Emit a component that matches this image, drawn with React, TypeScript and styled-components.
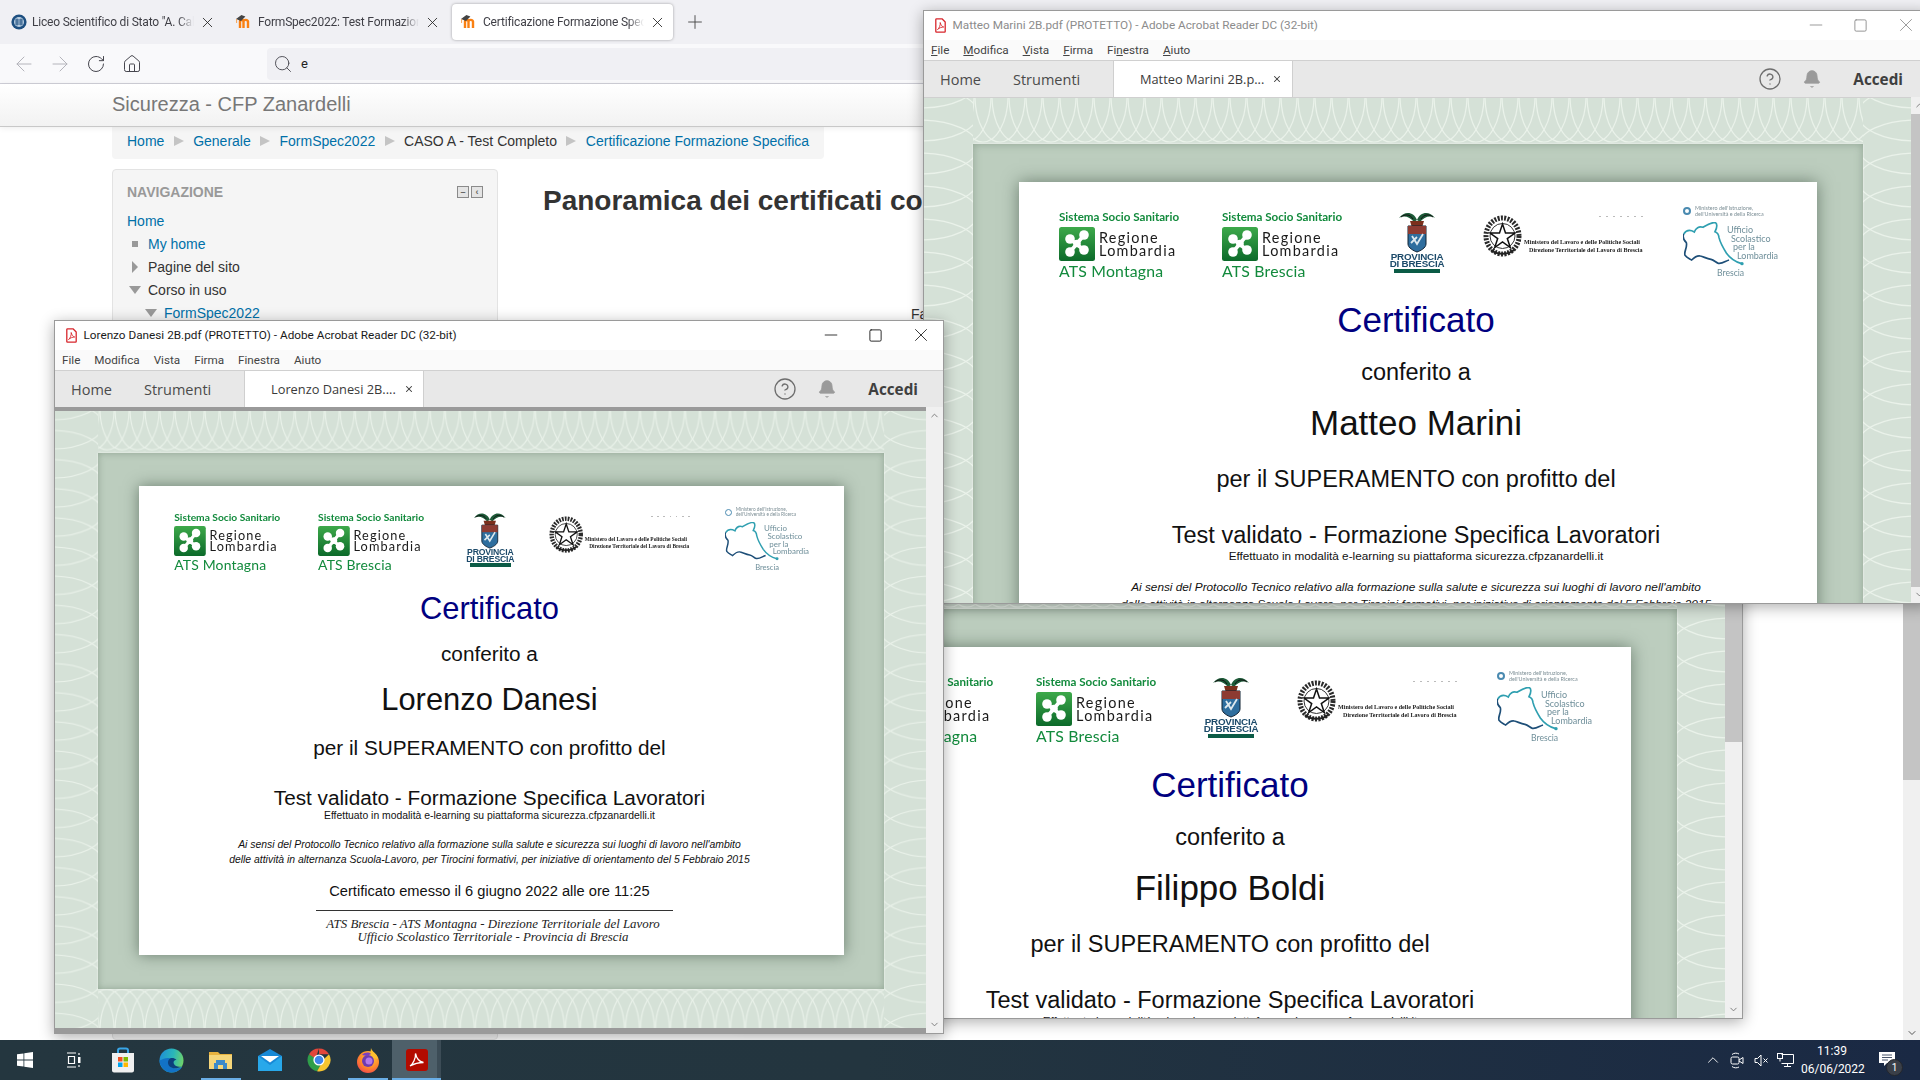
import React from "react";
import styled, { createGlobalStyle } from "styled-components";
import { ArrowLeft, ArrowRight, RotateCw, House, Search, Plus, X, CircleHelp, Bell, Minus, Square, ChevronUp, ChevronDown } from "lucide-react";

const Global = createGlobalStyle`
  html, body { margin: 0; padding: 0; background: #fff; overflow: hidden; }
  * { box-sizing: border-box; }
`;

const UI = `Roboto, "Noto Sans", sans-serif`;
const ARIAL = `"Liberation Sans", Arial, sans-serif`;
const GEO = `Lato, "Noto Sans", sans-serif`;

const Desktop = styled.div`
  position: relative; width: 1920px; height: 1080px; overflow: hidden; display: flex; flex-direction: column;
  font-family: ${UI};
`;

/* ---------- browser ---------- */
const Browser = styled.div`height: 1040px; display: flex; flex-direction: column; background: #fff; overflow: hidden;`;
const TabStrip = styled.div`height: 44px; flex: none; background: #f0f0f4; display: flex; align-items: flex-start; padding: 4px 0 0 2px; gap: 4px;`;
const Tab = styled.div<{ $active?: boolean }>`
  width: 221px; height: 36px; display: flex; align-items: center; padding: 0 7px 0 9px; gap: 5px; border-radius: 4px;
  background: ${(p) => (p.$active ? "#fff" : "transparent")};
  box-shadow: ${(p) => (p.$active ? "0 0 3px rgba(0,0,0,.35)" : "none")};
`;
const TabLabel = styled.span`
  flex: 1; font-size: 12px; color: #3f3f46; white-space: nowrap; overflow: hidden; letter-spacing: -.2px;
  mask-image: linear-gradient(90deg, #000 90%, transparent 100%);
`;
const NewTab = styled.div`height: 36px; margin-left: 7px; display: flex; align-items: center; color: #444;`;
const NavBar = styled.div`height: 40px; flex: none; background: #f9f9fb; border-bottom: 1px solid #cfcfd8; display: flex; align-items: center; padding-left: 12px; gap: 12px;`;
const NavButton = styled.span`width: 24px; display: flex; align-items: center; justify-content: center;`;
const UrlBar = styled.div`height: 32px; flex: 1; margin-left: 111px; background: #f0f0f4; border-radius: 4px; display: flex; align-items: center; padding-left: 6px; gap: 8px; font-size: 13px; color: #222;`;
const SiteHeader = styled.div`
  height: 43px; flex: none; background: linear-gradient(#fff, #f2f2f2); border-bottom: 1px solid #c8c8c8;
  box-shadow: 0 1px 6px rgba(0,0,0,.08); display: flex; align-items: center; padding: 0 0 2px 112px;
  font: 20px ${ARIAL}; color: #777; position: relative;
`;
const BrowserBody = styled.div`flex: 1; display: flex; min-height: 0;`;
const PageContent = styled.div`flex: 1; padding-left: 112px; font: 14px ${ARIAL}; color: #333;`;
const PageScroll = styled.div`position: relative; width: 17px; flex: none; background: #f0f0f0; display: flex; flex-direction: column; align-items: center; justify-content: flex-end; padding-bottom: 1px; color: #555;`;
const PageThumb = styled.span`position: absolute; left: 0; top: 0; width: 17px; height: 653px; background: #c4c4c4;`;
const Breadcrumb = styled.div`width: 712px; height: 32px; background: #f5f5f5; border-radius: 0 0 4px 4px; display: flex; align-items: center; padding: 0 0 4px 15px; gap: 9.4px;`;
const CrumbLink = styled.a`color: #0070a8;`;
const CrumbText = styled.span`color: #333;`;
const CrumbSep = styled.i`width: 0; height: 0; flex: none; border-top: 5px solid transparent; border-bottom: 5px solid transparent; border-left: 10px solid #c4c4c4;`;
const Columns = styled.div`display: flex; margin-top: 10px; height: 871px;`;
const Sidebar = styled.div`width: 386px; height: 100%; background: #f5f5f5; border: 1px solid #e3e3e3; border-radius: 4px; padding: 13px 14px 0;`;
const BlockHead = styled.div`display: flex; align-items: center; justify-content: space-between; height: 18px; font-weight: 700; color: #999; margin-bottom: 8px;`;
const BlockTools = styled.div`display: flex; gap: 2px;`;
const BlockTool = styled.span`width: 12px; height: 12px; background: #e4e4e4; border: 1px solid #8a8a8a; display: flex; align-items: center; justify-content: center; color: #666; font-size: 9px; line-height: 1;`;
const TreeLine = styled.div<{ $depth?: number }>`
  height: 23px; display: flex; align-items: center; gap: 8px; padding-left: ${(p) => 2 + (p.$depth ?? 0) * 16}px;
`;
const TreeRoot = styled(TreeLine)`padding-left: 0;`;
const TreeMark = styled.span`width: 11px; flex: none; display: flex; justify-content: center;`;
const TreeLink = styled.a`color: #0070a8;`;
const Bullet = styled.i`width: 6px; height: 6px; background: #999;`;
const CaretRight = styled.i`width: 0; height: 0; border-top: 6px solid transparent; border-bottom: 6px solid transparent; border-left: 6px solid #999;`;
const CaretDown = styled.i`width: 0; height: 0; border-left: 6px solid transparent; border-right: 6px solid transparent; border-top: 8px solid #999;`;
const Main = styled.div`margin-left: 45px; flex: 1; min-width: 0;`;
const Heading = styled.h2`margin: 16px 0 0; font: 700 28px/32px ${ARIAL}; color: #333; white-space: nowrap;`;
const Note = styled.div`margin-top: 87px; padding-left: 368px; line-height: 20px;`;

/* ---------- acrobat window ---------- */
const AppWindow = styled.div<{ $x: number; $y: number; $w: number; $h: number; $z: number }>`
  position: absolute; left: ${(p) => p.$x}px; top: ${(p) => p.$y}px; width: ${(p) => p.$w}px; height: ${(p) => p.$h}px; z-index: ${(p) => p.$z};
  display: flex; flex-direction: column; background: #fff; border: 1px solid #9a9a9a; box-shadow: 0 3px 14px rgba(0,0,0,.32);
`;
const TitleBar = styled.div`height: 29px; flex: none; display: flex; align-items: center; padding: 0 0 1px 11px; gap: 6.5px; background: #fff;`;
const TitleText = styled.span<{ $dim?: boolean }>`flex: 1; font-size: 11.75px; color: ${(p) => (p.$dim ? "#8c8c8c" : "#1a1a1a")}; white-space: nowrap;`;
const WinButtons = styled.div<{ $dim?: boolean }>`display: flex; color: ${(p) => (p.$dim ? "#888" : "#111")};`;
const WinButton = styled.span`width: 45px; height: 28px; display: flex; align-items: center; justify-content: center;`;
const MenuBar = styled.div`height: 20px; flex: none; background: #fafafa; display: flex; align-items: center; gap: 14px; padding-left: 7px; font-size: 11.7px; color: #444;`;
const MenuKey = styled.span<{ $on?: boolean }>`text-decoration: ${(p) => (p.$on ? "underline" : "none")};`;
const ToolBar = styled.div`height: 37px; flex: none; background: #e8e8e8; border-top: 1px solid #d0d0d0; display: flex; align-items: stretch; padding-left: 16px; font-family: "Open Sans", sans-serif; font-size: 14.5px; color: #4b4b4b;`;
const ToolItem = styled.span<{ $w: number }>`width: ${(p) => p.$w}px; display: flex; align-items: center;`;
const DocTab = styled.div`
  width: 180px; background: #fff; border-left: 1px solid #cfcfcf; border-right: 1px solid #cfcfcf; display: flex; align-items: center; padding-left: 26px; gap: 8px; font-size: 12.8px; color: #3a3a3a; white-space: nowrap;
`;
const ToolRight = styled.div`margin-left: auto; display: flex; align-items: center; gap: 20px; padding-right: 25px; color: #6e6e6e;`;
const SignIn = styled.b`font-size: 15.3px; color: #3f3f3f; margin-left: 11px;`;
const ViewRow = styled.div`flex: 1; display: flex; min-height: 0;`;
const DocView = styled.div<{ $active?: boolean }>`
  flex: 1; min-width: 0; overflow: hidden; background: #d5e1d7;
  border-top: ${(p) => (p.$active ? "4px solid #9a9a9a" : "1px solid #d0d0d0")};
  border-bottom: ${(p) => (p.$active ? "5px solid #9a9a9a" : "0")};
`;
const Scroller = styled.div`width: 17px; flex: none; background: #f0f0f0; display: flex; flex-direction: column; align-items: center; justify-content: space-between; position: relative; color: #777;`;
const ScrollArrow = styled.span`height: 17px; display: flex; align-items: center; justify-content: center;`;
const ScrollThumb = styled.span<{ $h: number }>`position: absolute; top: 17px; left: 0; width: 17px; height: ${(p) => p.$h}px; background: #c4c4c4;`;

/* ---------- certificate ---------- */
const Page = styled.div<{ $zoom: number; $top: number }>`
  zoom: ${(p) => p.$zoom}; position: relative; width: 988px; height: 699px; padding: ${(p) => p.$top}px 49px 0; background: #d5e1d7;
`;
const GuillocheArt = styled.svg`position: absolute; inset: 0; width: 100%; height: 100%;`;
const Frame = styled.div`
  position: relative; width: 890px; height: 607px; padding: 38px 46px; background: #bccdbe;
  box-shadow: 0 0 2px rgba(255,255,255,.8), inset 0 0 8px rgba(90,115,95,.45);
`;
const Sheet = styled.div`
  width: 798px; height: 531px; padding-right: 4px; background: #fff; box-shadow: 0 0 16px rgba(40,60,45,.55); display: flex; flex-direction: column; align-items: center; font-family: ${ARIAL}; color: #111; overflow: hidden;
`;
const Logos = styled.div`align-self: stretch; height: 95px; flex: none; display: flex; padding: 23px 0 0 40px; filter: blur(.25px);`;
const RegionLogo = styled.div<{ $gap: number }>`width: 123px; margin-right: ${(p) => p.$gap}px; padding-top: 6px; font-family: ${GEO}; color: #128a3c;`;
const RegionTop = styled.div`font-size: 11.6px; line-height: 12px; white-space: nowrap; font-weight: 700;`;
const RegionMid = styled.div`display: flex; align-items: center; gap: 4px; margin-top: 4px; height: 34px;`;
const RegionName = styled.div`font-size: 14.4px; line-height: 13px; color: #1a1a1a; letter-spacing: 1.3px;`;
const RegionBottom = styled.div`font-size: 15.8px; line-height: 18px; margin-top: 1px; white-space: nowrap; letter-spacing: .2px;`;
const Province = styled.div`width: 46px; margin: 5px 43px 0 0; display: flex; flex-direction: column; align-items: center; font: 700 9.8px/7.4px ${ARIAL}; color: #1c4a6a; white-space: nowrap;`;
const ProvinceLine = styled.div`letter-spacing: -.2px;`;
const ProvinceBar = styled.i`align-self: stretch; height: 4px; background: #0b5b46; margin-top: 1px;`;
const Ministry = styled.div`width: 161px; height: 60px; margin: 10px 38px 0 0; display: flex; align-items: flex-start; gap: 2px;`;
const MinistryText = styled.div`font: 700 6.1px/8px "Liberation Serif", serif; color: #222; white-space: nowrap;`;
const MinistryDots = styled.div`width: 44px; height: 1px; margin: 1px 0 21px 75px; background: repeating-linear-gradient(90deg, #bbb 0 2px, transparent 2px 7px);`;
const MinistryLine = styled.div<{ $in?: number }>`padding-left: ${(p) => p.$in ?? 0}px;`;
const School = styled.div`position: relative; width: 100px; height: 74px; font-family: ${GEO}; color: #6f8f9a;`;
const SchoolRing = styled.i`position: absolute; left: 1px; top: 2px; width: 8px; height: 8px; border: 2px solid #4a8ab0; border-radius: 50%;`;
const SchoolTiny = styled.div`padding-left: 13px; font-size: 5.4px; line-height: 6px; color: #7d8f96; white-space: nowrap;`;
const SchoolLine = styled.div<{ $in: number }>`padding-left: ${(p) => p.$in}px; font-size: 9px; line-height: 8.6px; white-space: nowrap;`;
const SchoolStack = styled.div`margin-top: 9px;`;
const SchoolCity = styled.div`padding: 9px 0 0 35px; font-size: 8.6px; line-height: 9px; color: #6f8f9a;`;
const SchoolMap = styled.svg`position: absolute; left: 1px; top: 17px;`;
const CertTitle = styled.div`margin-top: 23px; font-size: 35px; line-height: 40px; color: #000080;`;
const Body23 = styled.div<{ $mt: number }>`margin-top: ${(p) => p.$mt}px; font-size: 23.5px; line-height: 28px; white-space: nowrap;`;
const Name = styled.div`margin-top: 17px; font-size: 35px; line-height: 40px; white-space: nowrap;`;
const Online = styled.div`font-size: 11.76px; line-height: 14px; white-space: nowrap;`;
const Legal = styled.div`margin-top: 16px; font-size: 11.8px; line-height: 17px; font-style: italic; text-align: center; white-space: nowrap;`;
const Issued = styled.div`margin-top: 18px; font-size: 16.6px; line-height: 20px; white-space: nowrap;`;
const Rule = styled.div`margin: 11px 0 0 12px; width: 404px; height: 1px; background: #333; flex: none;`;
const Partners = styled.div`margin: 8px 0 0 8px; font: italic 14.6px/14px "Liberation Serif", serif; text-align: center; white-space: nowrap; color: #222;`;

/* ---------- taskbar ---------- */
const Taskbar = styled.div`height: 40px; flex: none; display: flex; align-items: stretch; background: linear-gradient(90deg, #24363f 0%, #23353f 45%, #1a2944 100%); color: #fff; position: relative; z-index: 20;`;
const TaskSlot = styled.div<{ $running?: boolean; $focused?: boolean }>`
  position: relative; width: 49px; flex: none; display: flex; align-items: center; justify-content: center;
  background: ${(p) => (p.$focused ? "#4e606a" : "transparent")};
  box-shadow: ${(p) => (p.$focused ? "inset -4px 0 0 #3c4c56" : "none")};
  ${(p) => p.$running ? `&::after { content: ""; position: absolute; left: ${p.$focused ? 0 : 5}px; right: ${p.$focused ? 0 : 4}px; bottom: 0; height: 2px; background: #6aaee6; }` : ""}
`;
const Tray = styled.div`margin-left: auto; display: flex; align-items: center;`;
const TrayIcon = styled.span`width: 24px; display: flex; justify-content: center; align-items: center;`;
const Clock = styled.div`width: 62px; margin-left: 4px; text-align: center; font-size: 12px; line-height: 18px; white-space: nowrap;`;
const Notify = styled.div`position: relative; width: 57px; height: 40px; padding: 12px 0 0 16px;`;
const NotifyBadge = styled.span`position: absolute; left: 23px; top: 19px; width: 17px; height: 17px; border-radius: 50%; background: #3a3f48; border: 1px solid #23262c; font-size: 10px; line-height: 15px; text-align: center;`;

/* ---------- drawings ---------- */
const MoodleIcon = () => (
  <svg width="17" height="16" viewBox="0 0 17 16" style={{ flex: "none" }}>
    <path d="M4 14V7.5c0-2 3.5-2 3.5 0V14M7.5 7.5c0-2 4-2.4 4.5 0V14" fill="none" stroke="#f98012" strokeWidth="2.4" />
    <path d="M5.4 1 L0 5l5 2 4.4-4.4z" fill="#444" />
    <path d="M0.6 5v4" stroke="#f5a356" strokeWidth="1" />
  </svg>
);
const SchoolCrest = () => (
  <svg width="16" height="16" viewBox="0 0 16 16" style={{ flex: "none" }}>
    <circle cx="8" cy="8" r="7.6" fill="#1d4f80" />
    <circle cx="8" cy="8" r="5" fill="#bcd0e2" />
    <path d="M4 6h8M4 8h8M4 10h8M6 4.5v7M10 4.5v7" stroke="#1d4f80" strokeWidth=".9" />
  </svg>
);
const PdfIcon = () => (
  <svg width="11" height="15" viewBox="0 0 11 15" style={{ flex: "none" }}>
    <path d="M.8 1.500C.8 1 1 .8 1.500.8h5.500L10.200 4v9.500c0 .5-.2.7-.7.7h-8c-.5 0-.7-.2-.7-.7z" fill="#fff" stroke="#d8262c" strokeWidth="1.300" strokeLinejoin="round" />
    <path d="M2.500 11.500c1.800-1 3-4.500 2.700-7 .7 2.700 1.800 4 3.500 4.500-2.200 0-4.500 1-6.200 2.500z" fill="none" stroke="#d8262c" strokeWidth=".9" />
  </svg>
);
const Rosa = () => (
  <svg width="36" height="34" viewBox="0 0 36 34" style={{ flex: "none" }}>
    <defs>
      <linearGradient id="rg" x1="0" y1="0" x2="0" y2="1">
        <stop offset="0" stopColor="#3da94a" />
        <stop offset="1" stopColor="#0c6a2a" />
      </linearGradient>
    </defs>
    <rect width="36" height="34" rx="2.500" fill="url(#rg)" />
    <g fill="#fff">
      <circle cx="11" cy="12" r="4.800" /><circle cx="25" cy="8" r="4.800" /><circle cx="11" cy="25" r="4.800" /><circle cx="25" cy="23" r="4.800" /><circle cx="18" cy="16.500" r="3.800" />
    </g>
    <path d="M11 12l14 11M25 8L11 25" stroke="#fff" strokeWidth="3.600" />
  </svg>
);
const ProvinceCrest = () => (
  <svg width="38" height="43" viewBox="0 0 38 43" style={{ flex: "none" }}>
    <path d="M19 10C16 2 7 0 1 8c5-3 11-1 15 4zM19 10c3-8 12-10 18-2-5-3-11-1-15 4z" fill="#1d5a38" />
    <path d="M3 7c4-3 9-3 12 2M35 7c-4-3-9-3-12 2" stroke="#111" strokeWidth="1" fill="none" />
    <path d="M12 11h14l-1.500 5h-11z" fill="#7b2f1c" />
    <path d="M10 16h18v18c0 4-6 7-9 8-3-1-9-4-9-8z" fill="#2f6e9e" stroke="#123" strokeWidth="1" />
    <path d="M10 16h18v8H10z" fill="#8d3b32" />
    <path d="M14 26l5 8 6-10M13 33l6-6" stroke="#dfe9ee" strokeWidth="1.800" fill="none" />
  </svg>
);
const Emblem = () => (
  <svg width="39" height="42" viewBox="0 0 39 42" style={{ flex: "none" }}>
    <ellipse cx="19.500" cy="21" rx="16.500" ry="18" fill="none" stroke="#2a2a2a" strokeWidth="5" strokeDasharray="2 1.300" />
    <circle cx="19.500" cy="21" r="12.500" fill="#fff" stroke="#333" strokeWidth="1" />
    <path d="M19.500 9l3 9h9.500l-7.700 5.600 3 9-7.800-5.600-7.800 5.600 3-9L7 18h9.500z" fill="#fff" stroke="#111" strokeWidth="1.500" />
    <path d="M8 35c6 5 17 5 23 0" fill="none" stroke="#222" strokeWidth="2" />
  </svg>
);
const LombardyMap = () => (
  <SchoolMap width="62" height="44" viewBox="0 0 186 132">
    <path d="M2 36C10 24 20 22 34 30 38 18 48 12 60 16 70 10 82 2 96 1c7 4 6 16 0 28 6 2 11 8 12 18 4 16 12 30 22 46 10 14 24 26 46 32" fill="none" stroke="#2f9fb0" strokeWidth="5" />
    <path d="M2 36C-2 46 2 54 10 62 14 76 2 88 6 100c6 8 14 10 20 14 8-8 18-14 26-12 10 2 18 8 32 10 10 2 14 10 22 12 12 2 20-6 32-10" fill="none" stroke="#1e4f78" strokeWidth="5" />
    <circle cx="177" cy="125" r="5" fill="#2f9fb0" />
  </SchoolMap>
);

const arcs = [-34, -17, 0, 17, 34];
const line = "#eaf2ea";
const Guilloche = ({ id }: { id: string }) => (
  <GuillocheArt viewBox="0 0 988 699" preserveAspectRatio="none">
    <defs>
      <pattern id={`${id}t`} width="17" height="46" patternUnits="userSpaceOnUse">
        {arcs.map((c) => <ellipse key={c} cx={c + 8} cy="-2" rx="25" ry="46" fill="none" stroke={line} strokeWidth="1.200" />)}
      </pattern>
      <pattern id={`${id}b`} width="17" height="46" patternUnits="userSpaceOnUse" patternTransform="translate(0 653)">
        {arcs.map((c) => <ellipse key={c} cx={c + 8} cy="48" rx="25" ry="46" fill="none" stroke={line} strokeWidth="1.200" />)}
      </pattern>
      <pattern id={`${id}l`} width="49" height="33" patternUnits="userSpaceOnUse">
        {[-33, 0, 33, 66].map((c) => <ellipse key={c} cx="-4" cy={c + 16} rx="58" ry="27" fill="none" stroke={line} strokeWidth="1.200" />)}
      </pattern>
      <pattern id={`${id}r`} width="49" height="33" patternUnits="userSpaceOnUse" patternTransform="translate(939 0)">
        {[-33, 0, 33, 66].map((c) => <ellipse key={c} cx="53" cy={c + 16} rx="58" ry="27" fill="none" stroke={line} strokeWidth="1.200" />)}
      </pattern>
    </defs>
    <rect x="49" y="0" width="890" height="46" fill={`url(#${id}t)`} />
    <rect x="49" y="653" width="890" height="46" fill={`url(#${id}b)`} />
    <rect x="0" y="0" width="49" height="699" fill={`url(#${id}l)`} />
    <rect x="939" y="0" width="49" height="699" fill={`url(#${id}r)`} />
  </GuillocheArt>
);

const RegionBlock = ({ place, gap }: { place: string; gap: number }) => (
  <RegionLogo $gap={gap}>
    <RegionTop>Sistema Socio Sanitario</RegionTop>
    <RegionMid>
      <Rosa />
      <RegionName>Regione<br />Lombardia</RegionName>
    </RegionMid>
    <RegionBottom>{place}</RegionBottom>
  </RegionLogo>
);

const CertPage = ({ name, zoom, top, id }: { name: string; zoom: number; top: number; id: string }) => (
  <Page $zoom={zoom} $top={top}>
    <Guilloche id={id} />
    <Frame>
      <Sheet>
        <Logos>
          <RegionBlock place="ATS Montagna" gap={40} />
          <RegionBlock place="ATS Brescia" gap={49} />
          <Province>
            <ProvinceCrest />
            <ProvinceLine>PROVINCIA</ProvinceLine>
            <ProvinceLine>DI BRESCIA</ProvinceLine>
            <ProvinceBar />
          </Province>
          <Ministry>
            <Emblem />
            <MinistryText>
              <MinistryDots />
              <MinistryLine>Ministero del Lavoro e delle Politiche Sociali</MinistryLine>
              <MinistryLine $in={5}>Direzione Territoriale del Lavoro di Brescia</MinistryLine>
            </MinistryText>
          </Ministry>
          <School>
            <SchoolRing />
            <LombardyMap />
            <SchoolTiny>Ministero dell'Istruzione,</SchoolTiny>
            <SchoolTiny>dell'Università e della Ricerca</SchoolTiny>
            <SchoolStack>
              <SchoolLine $in={45}>Ufficio</SchoolLine>
              <SchoolLine $in={49}>Scolastico</SchoolLine>
              <SchoolLine $in={51}>per la</SchoolLine>
              <SchoolLine $in={55}>Lombardia</SchoolLine>
            </SchoolStack>
            <SchoolCity>Brescia</SchoolCity>
          </School>
        </Logos>
        <CertTitle>Certificato</CertTitle>
        <Body23 $mt={18}>conferito a</Body23>
        <Name>{name}</Name>
        <Body23 $mt={22}>per il SUPERAMENTO con profitto del</Body23>
        <Body23 $mt={28}>Test validato - Formazione Specifica Lavoratori</Body23>
        <Online>Effettuato in modalità e-learning su piattaforma sicurezza.cfpzanardelli.it</Online>
        <Legal>
          Ai sensi del Protocollo Tecnico relativo alla formazione sulla salute e sicurezza sui luoghi di lavoro nell'ambito<br />
          delle attività in alternanza Scuola-Lavoro, per Tirocini formativi, per iniziative di orientamento del 5 Febbraio 2015
        </Legal>
        <Issued>Certificato emesso il 6 giugno 2022 alle ore 11:25</Issued>
        <Rule />
        <Partners>
          ATS Brescia - ATS Montagna - Direzione Territoriale del Lavoro<br />
          Ufficio Scolastico Territoriale - Provincia di Brescia
        </Partners>
      </Sheet>
    </Frame>
  </Page>
);

type WinProps = {
  id: string; name: string; short: string; x: number; y: number; w: number; h: number; z: number;
  zoom: number; top: number; active?: boolean; thumb?: number; keys?: boolean;
};
const menus: [string, string, string][] = [["", "F", "ile"], ["", "M", "odifica"], ["", "V", "ista"], ["", "F", "irma"], ["Fi", "n", "estra"], ["", "A", "iuto"]];

const AcrobatWindow = ({ id, name, short, x, y, w, h, z, zoom, top, active, thumb, keys }: WinProps) => (
  <AppWindow $x={x} $y={y} $w={w} $h={h} $z={z}>
    <TitleBar>
      <PdfIcon />
      <TitleText $dim={!active}>{name} 2B.pdf (PROTETTO) - Adobe Acrobat Reader DC (32-bit)</TitleText>
      <WinButtons $dim={!active}>
        <WinButton><Minus size={20} strokeWidth={1} /></WinButton>
        <WinButton><Square size={15} strokeWidth={1.4} /></WinButton>
        <WinButton><X size={22} strokeWidth={.9} /></WinButton>
      </WinButtons>
    </TitleBar>
    <MenuBar>
      {menus.map(([a, k, b]) => (
        <span key={a + k + b}>{a}<MenuKey $on={keys}>{k}</MenuKey>{b}</span>
      ))}
    </MenuBar>
    <ToolBar>
      <ToolItem $w={73}>Home</ToolItem>
      <ToolItem $w={100}>Strumenti</ToolItem>
      <DocTab>{short}<X size={10} strokeWidth={2.5} /></DocTab>
      <ToolRight>
        <CircleHelp size={24} strokeWidth={1.3} />
        <Bell size={20} fill="#9a9a9a" stroke="#9a9a9a" strokeWidth={1} />
        <SignIn>Accedi</SignIn>
      </ToolRight>
    </ToolBar>
    <ViewRow>
      <DocView $active={active}>
        <CertPage id={id} name={name} zoom={zoom} top={top} />
      </DocView>
      <Scroller>
        <ScrollArrow><ChevronUp size={11} /></ScrollArrow>
        {thumb ? <ScrollThumb $h={thumb} /> : null}
        <ScrollArrow><ChevronDown size={11} /></ScrollArrow>
      </Scroller>
    </ViewRow>
  </AppWindow>
);

const StoreIcon = () => (
  <svg width="24" height="26" viewBox="0 0 24 26">
    <path d="M7 6V3.500C7 2 8 1.500 9 1.500h6c1 0 2 .5 2 2V6" fill="none" stroke="#39a6e8" strokeWidth="2" />
    <path d="M1 6h22v17.500c0 1-1 2-2 2H3c-1 0-2-1-2-2z" fill="#f0f0f0" />
    <rect x="7" y="10" width="4.500" height="4.500" fill="#f25022" /><rect x="12.500" y="10" width="4.500" height="4.500" fill="#7fba00" />
    <rect x="7" y="15.500" width="4.500" height="4.500" fill="#00a4ef" /><rect x="12.500" y="15.500" width="4.500" height="4.500" fill="#ffb900" />
  </svg>
);
const EdgeIcon = () => (
  <svg width="25" height="25" viewBox="0 0 25 25">
    <defs>
      <linearGradient id="eg" x1="0" y1=".3" x2="1" y2=".5"><stop offset="0" stopColor="#1f8fd6" /><stop offset=".55" stopColor="#2ab7b8" /><stop offset="1" stopColor="#6fd36a" /></linearGradient>
    </defs>
    <circle cx="12.500" cy="12.500" r="12" fill="url(#eg)" />
    <path d="M.5 12.500C1 20 7 24.500 12.500 24.500c4.500 0 8.500-2 11-6-3 2-8 2.500-11 .5-3-2.500-3-6.500-.5-8.500-4-1.500-8 .5-11.500 2z" fill="#1272c6" />
    <path d="M11 10.500c-3 2.500-2.500 6.500.5 8.500 3 2 8 1.500 11-.5-3 .5-6.500 0-7.500-2.500-1-2 0-4 2.500-4-2-2-4.500-2.500-6.500-1.500z" fill="#0c3f7c" />
  </svg>
);
const FolderIcon = () => (
  <svg width="23" height="20" viewBox="0 0 23 20">
    <path d="M0 2h9l2 2h12v15H0z" fill="#e8b23e" />
    <path d="M0 5h23v14H0z" fill="#f6d67a" />
    <path d="M7 13v-3h9v3h2v6H5v-6z" fill="#3d8ac9" />
    <rect x="9" y="15" width="5" height="4" fill="#f6d67a" />
  </svg>
);
const MailIcon = () => (
  <svg width="24" height="22" viewBox="0 0 24 22">
    <path d="M0 7L12 0l12 7v15H0z" fill="#1789d6" />
    <path d="M0 7l12 9 12-9v15H0z" fill="#28a8ea" />
    <path d="M3 7h18l-9 6.500z" fill="#fff" />
  </svg>
);
const ChromeIcon = () => (
  <svg width="24" height="24" viewBox="-12 -12 24 24">
    <path d="M0-11.500A11.500 11.500 0 0 1 10 -5.700H0z" fill="#e3463a" /><path d="M0-11.500A11.500 11.500 0 0 0-10-5.700L-5 3z" fill="#e3463a" />
    <path d="M-10-5.700A11.500 11.500 0 0 0-2 11.300L3 3z" fill="#2f9e4a" />
    <path d="M10-5.700A11.500 11.500 0 0 1-2 11.300L5-1z" fill="#f7c52e" />
    <circle r="5.600" fill="#fff" /><circle r="4.300" fill="#3f86ea" />
  </svg>
);
const FoxIcon = () => (
  <svg width="24" height="25" viewBox="0 0 24 25">
    <defs><radialGradient id="fg" cx=".6" cy=".3" r=".9"><stop offset="0" stopColor="#ffd13b" /><stop offset=".5" stopColor="#ff8a2a" /><stop offset="1" stopColor="#ee2a5a" /></radialGradient></defs>
    <circle cx="12" cy="14" r="11" fill="url(#fg)" />
    <path d="M15 0c1 4 6 5 7 11l-8-2z" fill="#ffc12e" />
    <circle cx="12" cy="13" r="6" fill="#6f3bb0" />
    <circle cx="13" cy="13" r="3.500" fill="#b478e8" />
    <path d="M6 7c3-3 7-3 9-1l-4 2z" fill="#7a3fc0" />
  </svg>
);
const ReaderIcon = () => (
  <svg width="22" height="22" viewBox="0 0 22 22">
    <rect width="22" height="22" rx="3" fill="#b30b00" />
    <path d="M4 17c3-2 6-8 5.500-12.500 1 5 3 8 8 9-5 0-9 1-13.500 3.500z" fill="none" stroke="#fff" strokeWidth="1.300" />
  </svg>
);
const WinIcon = () => (
  <svg width="16" height="16" viewBox="0 0 16 16" fill="#fff">
    <path d="M0 2.300l6.500-.9v6.200H0zM7.300 1.300L16 0v7.600H7.300zM0 8.400h6.500v6.200L0 13.700zM7.300 8.400H16V16l-8.700-1.300z" />
  </svg>
);
const TaskViewIcon = () => (
  <svg width="16" height="16" viewBox="0 0 16 16" fill="none" stroke="#fff" strokeWidth="1.200">
    <path d="M1 1h9M1 15h9M2.500 4.500h6v7h-6zM13 1v2M13 13v2" />
    <rect x="12" y="5" width="2.500" height="6" fill="#fff" stroke="none" />
  </svg>
);
const MeetIcon = () => (
  <svg width="14" height="17" viewBox="0 0 14 17" fill="none" stroke="#fff" strokeWidth="1">
    <path d="M2 2.500C4 .8 7 .8 9 2M2 14.500C4 16.200 7 16.200 9 15" />
    <rect x="1" y="5" width="8" height="7" rx="1.500" />
    <path d="M9 8l4-2.500v6L9 9" />
  </svg>
);
const NetIcon = () => (
  <svg width="17" height="15" viewBox="0 0 17 15" fill="none" stroke="#fff" strokeWidth="1">
    <path d="M4.500 1.500H16.500V10.500H4.500M10.500 10.500V13.500M7 13.500H14" />
    <rect x=".5" y=".5" width="5" height="5" />
    <path d="M3 5.500v3" />
  </svg>
);
const SpeakerMute = () => (
  <svg width="15" height="13" viewBox="0 0 15 13" fill="none" stroke="#fff" strokeWidth="1">
    <path d="M1 4.500h2.500L7 1v11L3.500 8.500H1zM9.500 4.500l4 4M13.500 4.500l-4 4" />
  </svg>
);
const ChatIcon = () => (
  <svg width="16" height="15" viewBox="0 0 16 15">
    <path d="M0 0h16v11H8l-3 3v-3H0z" fill="#fff" />
    <path d="M3 3h10M3 5.500h10M3 8h6" stroke="#1a2944" strokeWidth=".8" />
  </svg>
);

export default function App() {
  return (
    <Desktop>
      <Global />
      <Browser>
        <TabStrip>
          <Tab><SchoolCrest /><TabLabel>Liceo Scientifico di Stato "A. Calini"</TabLabel><X size={17} strokeWidth={1.2} color="#222" /></Tab>
          <Tab><MoodleIcon /><TabLabel>FormSpec2022: Test Formazione Specifica</TabLabel><X size={17} strokeWidth={1.2} color="#222" /></Tab>
          <Tab $active><MoodleIcon /><TabLabel>Certificazione Formazione Specifica</TabLabel><X size={17} strokeWidth={1.2} color="#222" /></Tab>
          <NewTab><Plus size={22} strokeWidth={1} /></NewTab>
        </TabStrip>
        <NavBar>
          <NavButton><ArrowLeft size={24} strokeWidth={1} color="#b4b4bb" /></NavButton>
          <NavButton><ArrowRight size={24} strokeWidth={1} color="#b4b4bb" /></NavButton>
          <NavButton><RotateCw size={20} strokeWidth={1.2} color="#46464e" /></NavButton>
          <NavButton><House size={20} strokeWidth={1.2} color="#46464e" /></NavButton>
          <UrlBar><Search size={20} strokeWidth={1.1} color="#46464e" />e</UrlBar>
        </NavBar>
        <SiteHeader>Sicurezza - CFP Zanardelli</SiteHeader>
        <BrowserBody>
          <PageContent>
            <Breadcrumb>
              <CrumbLink>Home</CrumbLink><CrumbSep />
              <CrumbLink>Generale</CrumbLink><CrumbSep />
              <CrumbLink>FormSpec2022</CrumbLink><CrumbSep />
              <CrumbText>CASO A - Test Completo</CrumbText><CrumbSep />
              <CrumbLink>Certificazione Formazione Specifica</CrumbLink>
            </Breadcrumb>
            <Columns>
              <Sidebar>
                <BlockHead>
                  NAVIGAZIONE
                  <BlockTools><BlockTool>–</BlockTool><BlockTool>‹</BlockTool></BlockTools>
                </BlockHead>
                <TreeRoot><TreeLink>Home</TreeLink></TreeRoot>
                <TreeLine><TreeMark><Bullet /></TreeMark><TreeLink>My home</TreeLink></TreeLine>
                <TreeLine><TreeMark><CaretRight /></TreeMark><span>Pagine del sito</span></TreeLine>
                <TreeLine><TreeMark><CaretDown /></TreeMark><span>Corso in uso</span></TreeLine>
                <TreeLine $depth={1}><TreeMark><CaretDown /></TreeMark><TreeLink>FormSpec2022</TreeLink></TreeLine>
              </Sidebar>
              <Main>
                <Heading>Panoramica dei certificati con</Heading>
                <Note>Fa</Note>
              </Main>
            </Columns>
          </PageContent>
          <PageScroll><PageThumb /><ChevronDown size={12} /></PageScroll>
        </BrowserBody>
      </Browser>

      <AcrobatWindow id="fb" name="Filippo Boldi" short="Filippo Boldi 2B.p..." x={737} y={475} w={1006} h={544} z={3} zoom={1} top={46} thumb={163} />
      <AcrobatWindow id="mm" name="Matteo Marini" short="Matteo Marini 2B.p..." x={923} y={10} w={1006} h={594} z={4} zoom={1} top={46} thumb={473} keys />
      <AcrobatWindow id="ld" name="Lorenzo Danesi" short="Lorenzo Danesi 2B...." x={54} y={320} w={890} h={714} z={5} zoom={0.883} top={47.5} active />

      <Taskbar>
        <TaskSlot><WinIcon /></TaskSlot>
        <TaskSlot><TaskViewIcon /></TaskSlot>
        <TaskSlot><StoreIcon /></TaskSlot>
        <TaskSlot><EdgeIcon /></TaskSlot>
        <TaskSlot $running><FolderIcon /></TaskSlot>
        <TaskSlot><MailIcon /></TaskSlot>
        <TaskSlot><ChromeIcon /></TaskSlot>
        <TaskSlot $running><FoxIcon /></TaskSlot>
        <TaskSlot $running $focused><ReaderIcon /></TaskSlot>
        <Tray>
          <TrayIcon><ChevronUp size={18} strokeWidth={1.2} /></TrayIcon>
          <TrayIcon><MeetIcon /></TrayIcon>
          <TrayIcon><SpeakerMute /></TrayIcon>
          <TrayIcon><NetIcon /></TrayIcon>
          <Clock>11:39<br />06/06/2022</Clock>
          <Notify><ChatIcon /><NotifyBadge>1</NotifyBadge></Notify>
        </Tray>
      </Taskbar>
    </Desktop>
  );
}
